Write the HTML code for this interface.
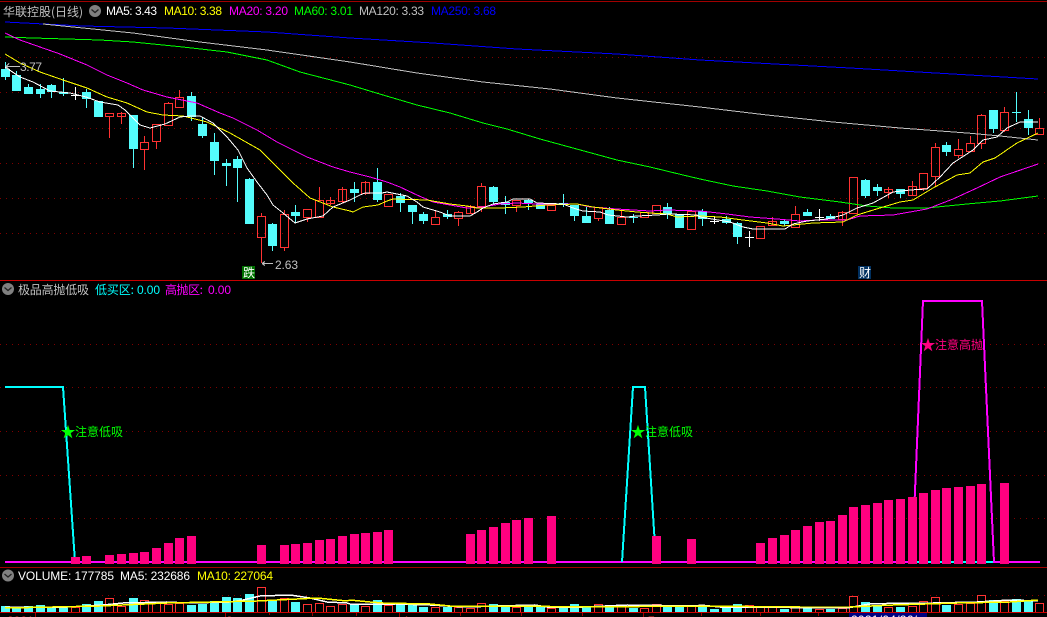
<!DOCTYPE html>
<html><head><meta charset="utf-8"><style>
html,body{margin:0;padding:0;background:#000;width:1047px;height:617px;overflow:hidden}
svg{display:block;position:absolute;left:0;top:0}
text{font-family:"Liberation Sans","WenQuanYi Zen Hei","Noto Sans CJK SC",sans-serif;font-size:12px}
.cjk{font-family:"WenQuanYi Zen Hei","Noto Sans CJK SC",sans-serif;font-size:12px}
.star{font-family:"WenQuanYi Zen Hei","Noto Sans CJK SC",sans-serif;font-size:15px}
</style></head><body>
<svg width="1047" height="617" viewBox="0 0 1047 617" shape-rendering="crispEdges" fill="none">
<!-- grid -->
<path stroke="#800000" stroke-dasharray="1 5" d="M0 57.5H1047M0 92.5H1047M0 128.5H1047M0 163.5H1047M0 198.5H1047M0 233.5H1047M0 344.5H1047M0 387.5H1047M0 431.5H1047M0 475.5H1047M0 518.5H1047M0 595.5H1047"/>
<path stroke="#a00000" d="M0 1.5H1047M0 567.5H1047"/>
<path stroke="#c80000" d="M0 280.5H1047M0 612.5H1047"/>
<!-- cyan candles -->
<path fill="#54FCFC" d="M1 69h9v8h-9zM12 75h9v16h-9zM24 87h9v7h-9zM36 89h9v5h-9zM47 85h9v7h-9zM59 92h9v2h-9zM82 92h9v7h-9zM94 101h9v16h-9zM129 115h9v34h-9zM187 96h9v21h-9zM198 124h9v12h-9zM210 142h9v19h-9zM222 163h9v3h-9zM233 159h9v9h-9zM245 179h9v45h-9zM268 224h9v22h-9zM291 212h9v4h-9zM350 189h9v4h-9zM373 182h9v18h-9zM396 196h9v7h-9zM408 205h9v7h-9zM419 214h9v7h-9zM443 214h9v3h-9zM489 187h9v15h-9zM501 202h9v3h-9zM524 200h9v3h-9zM536 204h9v5h-9zM559 203h9v2h-9zM570 205h9v11h-9zM582 216h9v7h-9zM605 210h9v14h-9zM629 217h9v1h-9zM663 207h9v7h-9zM675 214h9v14h-9zM698 211h9v8h-9zM722 219h9v4h-9zM733 223h9v14h-9zM780 221h9v3h-9zM803 212h9v4h-9zM826 216h9v3h-9zM861 180h9v16h-9zM873 187h9v4h-9zM896 189h9v5h-9zM942 145h9v7h-9zM989 110h9v19h-9zM1012 112h9v1h-9zM1024 119h9v9h-9z"/>
<path stroke="#54FCFC" d="M5.500 62V80M16.500 71V75M28.500 84V87M40.500 84V98M51.500 84V98M63.500 78V96M86.500 89V108M133.500 149V168M191.500 92V121M202.500 117V138M214.500 133V175M226.500 159V186M237.500 156V202M249.500 178V179M272.500 223V251M295.500 205V223M354.500 182V202M377.500 168V202M400.500 193V212M412.500 212V224M423.500 212V224M447.500 210V219M493.500 186V205M505.500 196V214M528.500 199V210M563.500 194V207M574.500 216V221M586.500 207V216M609.500 207V210M633.500 214V223M667.500 203V219M702.500 209V226M726.500 216V224M737.500 222V244M784.500 220V226M807.500 209V212M830.500 214V216M865.500 179V198M877.500 184V196M900.500 194V198M946.500 142V156M993.500 129V133M1016.500 92V122M1028.500 110V135"/>
<!-- white crosses -->
<path stroke="#fff" d="M71 95.500h9M75.500 87V100M710 221.500h9M714.500 216V224M745 237.500h9M749.500 231V247M815 217.500h9M819.500 209V221"/>
<!-- red candles -->
<path stroke="#FF3232" d="M105.500 113.500h8v3h-8zM109.500 116V138M117.500 113.500h8v3h-8zM121.500 112V124M140.500 142.500h8v7h-8zM144.500 136V142M144.500 149V170M152.500 124.500h8v17h-8zM156.500 141V149M164.500 103.500h8v22h-8zM168.500 102V103M175.500 97.500h8v10h-8zM179.500 90V97M257.500 216.500h8v21h-8zM261.500 213V216M261.500 237V263M280.500 214.500h8v33h-8zM284.500 210V214M284.500 247V251M303.500 209.500h8v8h-8zM307.500 217V222M315.500 200.500h8v17h-8zM319.500 187V200M326.500 200.500h8v3h-8zM330.500 197V205M338.500 189.500h8v12h-8zM342.500 187V203M361.500 182.500h8v11h-8zM365.500 181V195M384.500 194.500h8v12h-8zM431.500 217.500h8v7h-8zM435.500 211V217M454.500 212.500h8v6h-8zM458.500 211V212M458.500 218V226M466.500 206.500h8v7h-8zM470.500 205V214M477.500 186.500h8v20h-8zM481.500 183V186M481.500 206V212M512.500 200.500h8v5h-8zM516.500 205V212M547.500 205.500h8v5h-8zM594.500 207.500h8v11h-8zM598.500 218V221M617.500 217.500h8v7h-8zM621.500 211V217M640.500 212.500h8v5h-8zM652.500 205.500h8v8h-8zM687.500 211.500h8v18h-8zM756.500 226.500h8v12h-8zM760.500 238V239M768.500 221.500h8v4h-8zM772.500 217V226M791.500 214.500h8v13h-8zM795.500 206V214M838.500 212.500h8v7h-8zM842.500 211V226M849.500 177.500h8v36h-8zM884.500 189.500h8v3h-8zM888.500 187V198M908.500 186.500h8v9h-8zM912.500 181V196M919.500 173.500h8v15h-8zM923.500 188V191M931.500 147.500h8v29h-8zM935.500 143V147M935.500 176V186M954.500 149.500h8v6h-8zM958.500 139V149M958.500 155V158M966.500 143.500h8v8h-8zM970.500 136V143M977.500 115.500h8v28h-8zM981.500 114V115M981.500 143V149M1000.500 112.500h8v18h-8zM1004.500 107V112M1004.500 130V132M1035.500 128.500h8v6h-8zM1039.500 118V128M1039.500 134V135"/>
<!-- MA lines -->
<polyline stroke="#0000FF" points="5,22 83,26 167,28 267,32 350,38 433,43 517,49 617,54 700,60 850,68 1038,79"/>
<polyline stroke="#C0C0C0" points="43,24 83,28 133,33 200,42 267,50 350,62 417,73 483,82 550,89 617,98 700,107 767,115 833,122 900,128 967,133 1000,136 1038,140"/>
<polyline stroke="#00FF00" points="5,37 33,38 100,40 133,42 183,47 227,52 267,60 300,72 350,85 383,95 417,105 450,113 483,123 507,129 540,139 617,160 650,167 683,175 700,179 733,186 767,191 800,197 840,202 867,206 893,208 927,208 967,204 1000,201 1038,196"/>
<polyline stroke="#FF00FF" points="5,33 20,40 40,47 60,54 87,65 107,75 127,83 143,90 167,97 197,103 220,113 233,118 257,130 277,142 307,157 333,167 350,172 370,177 387,182 400,187 417,195 433,202 450,205 467,208 483,207 500,204 517,203 537,204 577,204 590,207 617,209 650,211 667,210 700,211 727,214 750,217 777,219 800,221 817,220 847,220 860,216 893,215 927,209 953,199 977,188 1000,177 1038,164"/>
<polyline stroke="#FFFF00" points="5,54 20,63 40,72 63,80 87,88 107,97 127,103 147,112 163,115 183,116 207,122 230,133 260,150 277,167 293,183 310,198 333,207 350,211 353,212 363,207 378,205 387,201 393,199 427,200 450,204 467,206 477,208 500,208 523,207 547,205 577,204 593,207 617,210 637,212 650,213 667,214 677,217 700,216 720,217 743,220 767,223 783,226 803,224 813,223 843,222 857,215 870,211 900,202 913,200 933,188 957,175 970,173 983,162 995,158 1017,143 1038,133"/>
<polyline stroke="#FFFFFF" points="5,67 20,77 33,82 50,91 70,93 86,97 100,102 118,105 125,110 140,125 150,128 165,124 180,117 190,116 200,116 213,123 227,137 238,150 247,168 257,182 267,195 273,205 283,213 295,223 307,219 323,216 333,207 350,200 360,195 365,193 382,193 387,192 407,196 417,202 423,207 440,212 450,216 470,216 477,212 483,208 493,204 507,202 513,199 530,199 537,203 563,204 573,208 583,211 600,212 608,215 627,217 637,216 657,215 670,214 697,215 700,217 730,222 743,227 753,229 785,229 793,224 807,221 827,219 843,215 857,208 873,203 893,192 910,190 927,189 940,177 953,163 973,150 983,140 997,137 1007,128 1020,122 1038,122"/>
<!-- arrows -->
<path stroke="#C0C0C0" d="M6 66.500H20M6 66.500l3-3M6 66.500l3 3M262 263.500H273M262 263.500l3-2M262 263.500l3 2"/>
<!-- badges -->
<rect x="242" y="266" width="13" height="13" fill="#007000"/>
<rect x="858" y="266" width="13" height="13" fill="#003060"/>
<!-- indicator lines -->
<path stroke="#FF00FF" stroke-width="2" d="M5 562H1040"/>
<path stroke="#00FFFF" stroke-width="2" d="M917 562H993"/>
<polyline stroke="#00FFFF" stroke-width="2" points="5,387 63,387 75,562"/>
<polyline stroke="#00FFFF" stroke-width="2" points="622,562 633,387 645,387 656,562"/>
<polyline stroke="#FF00FF" stroke-width="2" points="912,562 923,301 982,301 994,562"/>
<!-- pink bars -->
<path fill="#FF0080" d="M71 557h9v7h-9zM82 556h9v8h-9zM105 555h9v9h-9zM117 554h9v10h-9zM129 553h9v11h-9zM140 552h9v12h-9zM152 548h9v16h-9zM164 543h9v21h-9zM175 538h9v26h-9zM187 536h9v28h-9zM257 545h9v19h-9zM280 545h9v19h-9zM291 544h9v20h-9zM303 543h9v21h-9zM315 540h9v24h-9zM326 539h9v25h-9zM338 536h9v28h-9zM350 534h9v30h-9zM361 533h9v31h-9zM373 532h9v32h-9zM384 530h9v34h-9zM466 534h9v30h-9zM477 530h9v34h-9zM489 527h9v37h-9zM501 523h9v41h-9zM512 520h9v44h-9zM524 518h9v46h-9zM547 516h9v48h-9zM652 536h9v28h-9zM687 539h9v25h-9zM756 543h9v21h-9zM768 538h9v26h-9zM780 535h9v29h-9zM791 530h9v34h-9zM803 526h9v38h-9zM815 522h9v42h-9zM826 521h9v43h-9zM838 515h9v49h-9zM849 507h9v57h-9zM861 505h9v59h-9zM873 503h9v61h-9zM884 500h9v64h-9zM896 499h9v65h-9zM908 497h9v67h-9zM919 493h9v71h-9zM931 490h9v74h-9zM942 488h9v76h-9zM954 487h9v77h-9zM966 486h9v78h-9zM977 484h9v80h-9zM1000 483h9v81h-9z"/>
<!-- volume bars -->
<path fill="#54FCFC" d="M1 606h9v6h-9zM12 607h9v5h-9zM24 606h9v6h-9zM36 605h9v7h-9zM47 607h9v5h-9zM59 607h9v5h-9zM82 604h9v8h-9zM94 601h9v11h-9zM129 598h9v14h-9zM187 605h9v7h-9zM198 604h9v8h-9zM210 601h9v11h-9zM222 597h9v15h-9zM233 598h9v14h-9zM245 594h9v18h-9zM268 600h9v12h-9zM291 602h9v10h-9zM350 605h9v7h-9zM373 600h9v12h-9zM396 605h9v7h-9zM408 605h9v7h-9zM419 607h9v5h-9zM443 607h9v5h-9zM489 604h9v8h-9zM501 606h9v6h-9zM524 606h9v6h-9zM536 607h9v5h-9zM559 608h9v4h-9zM570 604h9v8h-9zM582 607h9v5h-9zM605 606h9v6h-9zM629 608h9v4h-9zM663 607h9v5h-9zM675 605h9v7h-9zM698 607h9v5h-9zM710 609h9v3h-9zM722 608h9v4h-9zM733 604h9v8h-9zM780 609h9v3h-9zM803 608h9v4h-9zM826 609h9v3h-9zM861 602h9v10h-9zM873 606h9v6h-9zM896 607h9v5h-9zM942 605h9v7h-9zM989 600h9v12h-9zM1012 599h9v13h-9zM1024 600h9v12h-9z"/>
<path stroke="#FF3232" d="M71.500 612V607.500h8V612M105.500 612V598.500h8V612M117.500 612V606.500h8V612M140.500 612V600.500h8V612M152.500 612V603.500h8V612M164.500 612V604.500h8V612M175.500 612V603.500h8V612M257.500 612V587.500h8V612M280.500 612V598.500h8V612M303.500 612V604.500h8V612M315.500 612V603.500h8V612M326.500 612V606.500h8V612M338.500 612V604.500h8V612M361.500 612V606.500h8V612M384.500 612V605.500h8V612M431.500 612V607.500h8V612M454.500 612V607.500h8V612M466.500 612V608.500h8V612M477.500 612V603.500h8V612M512.500 612V607.500h8V612M547.500 612V608.500h8V612M594.500 612V604.500h8V612M617.500 612V606.500h8V612M640.500 612V608.500h8V612M652.500 612V604.500h8V612M687.500 612V605.500h8V612M745.500 612V605.500h8V612M756.500 612V607.500h8V612M768.500 612V607.500h8V612M791.500 612V607.500h8V612M815.500 612V609.500h8V612M838.500 612V608.500h8V612M849.500 612V596.500h8V612M884.500 612V607.500h8V612M908.500 612V606.500h8V612M919.500 612V601.500h8V612M931.500 612V597.500h8V612M954.500 612V604.500h8V612M966.500 612V603.500h8V612M977.500 612V595.500h8V612M1000.500 612V601.500h8V612M1035.500 612V603.500h8V612"/>
<polyline stroke="#FFFFFF" stroke-width="1.5" points="5,607 33,607 67,607 103,605 123,603 167,602 187,603 230,602 243,600 260,596 290,595 310,598 327,602 347,603 350,604 395,604 430,605 465,607 497,606 535,605 547,607 583,607 627,605 697,606 700,605 720,607 767,607 813,608 847,608 870,604 903,603 933,603 977,602 1010,600 1038,601"/>
<polyline stroke="#FFFF00" stroke-width="1.5" points="5,608 100,606 167,603 257,601 317,598 347,601 350,600 370,602 383,603 430,604 450,606 517,606 583,607 697,606 800,607 850,607 893,605 957,603 1010,602 1038,600"/>
<!-- ticks -->
<path stroke="#A00000" d="M35.500 613V617M225.500 613V617M269.500 613V615M312.500 613V616M356.500 613V616M399.500 613V617M460.500 613V616M521.500 613V616M582.500 613V616M643.500 613V617M701.500 613V616M760.500 613V616M818.500 613V616"/>
<rect x="849" y="613" width="78" height="4" fill="#000080"/>
<!-- header icons -->
<g shape-rendering="geometricPrecision">
<circle cx="95" cy="11" r="6" fill="#808080"/><path d="M91.500 9.500l3.500 3 3.500-3" stroke="#222" stroke-width="1.300"/>
<circle cx="8" cy="289" r="6" fill="#808080"/><path d="M4.500 287.500l3.500 3 3.500-3" stroke="#222" stroke-width="1.300"/>
<circle cx="8" cy="575.500" r="6" fill="#808080"/><path d="M4.500 574l3.500 3 3.500-3" stroke="#222" stroke-width="1.300"/>
</g>
<!-- header text -->
<text class="cjk" x="3" y="16" fill="#C0C0C0" textLength="80" lengthAdjust="spacing">华联控股(日线)</text>
<text x="106" y="15" fill="#FFFFFF" textLength="51" lengthAdjust="spacing">MA5: 3.43</text>
<text x="164" y="15" fill="#FFFF00" textLength="58" lengthAdjust="spacing">MA10: 3.38</text>
<text x="229" y="15" fill="#FF00FF" textLength="59" lengthAdjust="spacing">MA20: 3.20</text>
<text x="294" y="15" fill="#00FF00" textLength="59" lengthAdjust="spacing">MA60: 3.01</text>
<text x="359" y="15" fill="#C0C0C0" textLength="65" lengthAdjust="spacing">MA120: 3.33</text>
<text x="431" y="15" fill="#0000FF" textLength="65" lengthAdjust="spacing">MA250: 3.68</text>
<text x="20" y="71" fill="#C0C0C0" textLength="22" lengthAdjust="spacing">3.77</text>
<text x="275" y="269" fill="#C0C0C0" textLength="23" lengthAdjust="spacing">2.63</text>
<text class="cjk" x="243" y="277" fill="#FFFFFF">跌</text>
<text class="cjk" x="859" y="277" fill="#FFFFFF">财</text>
<text class="cjk" x="18" y="294" fill="#C0C0C0" textLength="71" lengthAdjust="spacing">极品高抛低吸</text>
<text class="cjk" x="95" y="294" fill="#00FFFF" textLength="39" lengthAdjust="spacing">低买区:</text>
<text x="137" y="294" fill="#00FFFF" textLength="23" lengthAdjust="spacing">0.00</text>
<text class="cjk" x="165" y="294" fill="#FF00FF" textLength="38" lengthAdjust="spacing">高抛区:</text>
<text x="208" y="294" fill="#FF00FF" textLength="23" lengthAdjust="spacing">0.00</text>
<text class="star" x="60.500" y="437" fill="#00FF00">★</text>
<text class="cjk" x="75" y="436" fill="#00FF00" textLength="48" lengthAdjust="spacing">注意低吸</text>
<text class="star" x="630.500" y="437" fill="#00FF00">★</text>
<text class="cjk" x="645" y="436" fill="#00FF00" textLength="48" lengthAdjust="spacing">注意低吸</text>
<text class="star" x="920.500" y="350" fill="#FF0080">★</text>
<text class="cjk" x="935" y="349" fill="#FF0080" textLength="48" lengthAdjust="spacing">注意高抛</text>
<text x="18" y="580" fill="#FFFFFF" textLength="96" lengthAdjust="spacing">VOLUME: 177785</text>
<text x="120" y="580" fill="#FFFFFF" textLength="70" lengthAdjust="spacing">MA5: 232686</text>
<text x="197" y="580" fill="#FFFF00" textLength="76" lengthAdjust="spacing">MA10: 227064</text>
<text x="7" y="625" fill="#FF3232">2021</text>
<text x="226" y="625" fill="#FF3232">2</text>
<text x="402" y="625" fill="#FF3232">4</text>
<text x="648" y="625" fill="#FF3232">7</text>
<text x="851" y="624" fill="#FFFFFF" textLength="66" lengthAdjust="spacing">2021/04/26/</text>
</svg>
</body></html>
